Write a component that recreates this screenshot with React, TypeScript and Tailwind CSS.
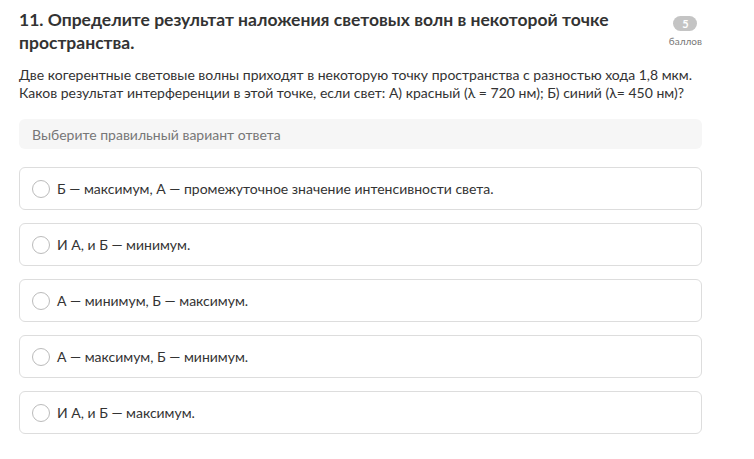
import React from "react";

const OPTIONS = [
  "Б — максимум, А — промежуточное значение интенсивности света.",
  "И А, и Б — минимум.",
  "А — минимум, Б — максимум.",
  "А — максимум, Б — минимум.",
  "И А, и Б — максимум.",
];

export default function App() {
  return (
    <div
      className="w-[754px] h-[459px] bg-white text-[#333333] overflow-hidden"
      style={{ fontFamily: "Lato, 'Noto Sans', sans-serif" }}
    >
      <div className="pl-[19px] pr-[52px] pt-[8px]">
        <div className="flex items-start justify-between">
          <h2 className="text-[17.5px] font-bold leading-[23px] w-[620px]">
            11. Определите результат наложения световых волн в некоторой точке пространства.
          </h2>
          <div className="flex flex-col items-center pt-[8px]">
            <div className="h-[15px] w-[24px] rounded-full bg-[#c4c4c4] text-white text-[11px] font-bold leading-[15px] text-center">
              5
            </div>
            <div className="text-[10px] text-[#777777] leading-[14px] mt-[3px]">баллов</div>
          </div>
        </div>

        <p className="mt-[12px] text-[14px] leading-[18px]">
          Две когерентные световые волны приходят в некоторую точку пространства с разностью хода 1,8 мкм.
          <br />
          Каков результат интерференции в этой точке, если свет: А) красный (λ = 720 нм); Б) синий (λ= 450 нм)?
        </p>

        <div className="mt-[17px] h-[30px] rounded-md bg-[#f6f6f6] flex items-center px-[13px] text-[14px] text-[#777777]">
          Выберите правильный вариант ответа
        </div>

        <div className="mt-[18px] flex flex-col gap-[13px]">
          {OPTIONS.map((o) => (
            <label
              key={o}
              className="h-[43px] rounded-md border border-[#dddddd] flex items-center px-[12px] gap-[7px] text-[14px]"
            >
              <span className="w-[18px] h-[18px] rounded-full border border-[#bbbbbb] bg-white shrink-0" />
              <span>{o}</span>
            </label>
          ))}
        </div>
      </div>
    </div>
  );
}
